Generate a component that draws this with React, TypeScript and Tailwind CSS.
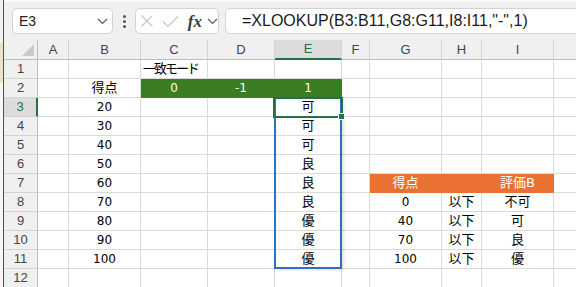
import React from "react";

const COLS = ["A", "B", "C", "D", "E", "F", "G", "H", "I", "J"];

type CellSpec = { t?: string; kind?: "green" | "orange" | "left" | "cjk" };

const data: Record<number, Record<string, CellSpec>> = {
  1: { C: { t: "一致モード", kind: "left" } },
  2: {
    B: { t: "得点", kind: "cjk" },
    C: { t: "0", kind: "green" },
    D: { t: "-1", kind: "green" },
    E: { t: "1", kind: "green" },
  },
  3: { B: { t: "20" }, E: { t: "可", kind: "cjk" } },
  4: { B: { t: "30" }, E: { t: "可", kind: "cjk" } },
  5: { B: { t: "40" }, E: { t: "可", kind: "cjk" } },
  6: { B: { t: "50" }, E: { t: "良", kind: "cjk" } },
  7: {
    B: { t: "60" },
    E: { t: "良", kind: "cjk" },
    G: { t: "得点", kind: "orange" },
    H: { t: "", kind: "orange" },
    I: { t: "評価B", kind: "orange" },
  },
  8: { B: { t: "70" }, E: { t: "良", kind: "cjk" }, G: { t: "0" }, H: { t: "以下", kind: "cjk" }, I: { t: "不可", kind: "cjk" } },
  9: { B: { t: "80" }, E: { t: "優", kind: "cjk" }, G: { t: "40" }, H: { t: "以下", kind: "cjk" }, I: { t: "可", kind: "cjk" } },
  10: { B: { t: "90" }, E: { t: "優", kind: "cjk" }, G: { t: "70" }, H: { t: "以下", kind: "cjk" }, I: { t: "良", kind: "cjk" } },
  11: { B: { t: "100" }, E: { t: "優", kind: "cjk" }, G: { t: "100" }, H: { t: "以下", kind: "cjk" }, I: { t: "優", kind: "cjk" } },
  12: {},
};

function Cell({ spec }: { spec?: CellSpec }) {
  if (!spec) {
    return <div className="h-[19px] border-r border-b border-[#dadada]" />;
  }
  if (spec.kind === "green") {
    return (
      <div className="h-[19px] border-r border-b border-[#3b7d23] bg-[#3b7d23] text-white text-[12px] flex items-center justify-center">
        {spec.t}
      </div>
    );
  }
  if (spec.kind === "orange") {
    return (
      <div className="h-[19px] border-r border-b border-[#e97132] bg-[#e97132] text-white text-[13px] flex items-center justify-center">
        {spec.t}
      </div>
    );
  }
  if (spec.kind === "left") {
    return (
      <div className="h-[19px] border-r border-b border-[#dadada] text-black text-[13px] tracking-[-2px] flex items-center pl-[2px] whitespace-nowrap overflow-visible">
        {spec.t}
      </div>
    );
  }
  if (spec.kind === "cjk") {
    return (
      <div className="h-[19px] border-r border-b border-[#dadada] text-black text-[13px] flex items-center justify-center whitespace-nowrap">
        {spec.t}
      </div>
    );
  }
  return (
    <div className="h-[19px] border-r border-b border-[#dadada] text-black text-[12px] flex items-center justify-center whitespace-nowrap">
      {spec.t}
    </div>
  );
}

function Chevron() {
  return (
    <svg width="11" height="7" viewBox="0 0 11 7">
      <path d="M1 1L5.5 5.5L10 1" stroke="#5a5a5a" strokeWidth="1.2" fill="none" />
    </svg>
  );
}

export default function App() {
  const rows = [1, 2, 3, 4, 5, 6, 7, 8, 9, 10, 11, 12];
  return (
    <div className="w-[576px] h-[287px] overflow-hidden flex bg-white font-['DejaVu_Sans','Noto_Sans_CJK_JP',sans-serif]">
      {/* left window edge */}
      <div className="w-[4px] shrink-0 h-full flex flex-col border-r border-[#1f6e43]">
        <div className="h-[43px] bg-[#f0f0f0]" />
        <div className="h-[40px] bg-[#e9e5c4]" />
        <div className="flex-1 bg-[#f7f7f7]" />
      </div>

      <div className="flex-1 flex flex-col min-w-0 overflow-hidden">
        {/* formula toolbar */}
        <div className="h-[40px] shrink-0 bg-[#f0f0f0] border-t-2 border-[#fafafa] flex items-center pl-[8px] font-['Liberation_Sans',sans-serif]">
          <div className="w-[101px] shrink-0 h-[26px] bg-white border border-[#d3d3d3] rounded-[5px] flex items-center justify-between pl-[6px] pr-[4px]">
            <span className="text-[14px] text-[#222]">E3</span>
            <Chevron />
          </div>
          <div className="w-[22px] shrink-0 flex flex-col items-center gap-[2px]">
            <span className="w-[3px] h-[3px] rounded-full bg-[#555]" />
            <span className="w-[3px] h-[3px] rounded-full bg-[#555]" />
            <span className="w-[3px] h-[3px] rounded-full bg-[#555]" />
          </div>
          <div className="w-[84px] shrink-0 h-[26px] bg-white border border-[#d3d3d3] rounded-[5px] flex items-center pl-[4px]">
            <svg width="14" height="14" viewBox="0 0 14 14">
              <path d="M1.5 1.5L12.5 12.5M12.5 1.5L1.5 12.5" stroke="#c6c6c6" strokeWidth="1.2" fill="none" />
            </svg>
            <svg width="17" height="13" viewBox="0 0 17 13" className="ml-[8px]">
              <path d="M1 6.5L6 11.5L16 1.5" stroke="#c6c6c6" strokeWidth="1.2" fill="none" />
            </svg>
            <span className="ml-[9px] text-[17px] italic font-semibold text-[#3a3a3a] font-['Liberation_Serif',serif] leading-none">
              fx
            </span>
            <span className="ml-[5px]">
              <Chevron />
            </span>
          </div>
          <div className="ml-[6px] w-[370px] h-[26px] bg-white border border-[#d3d3d3] rounded-l-[5px] flex items-center pl-[16px] shrink-0">
            <span className="text-[16px] text-[#1a1a1a] whitespace-nowrap">=XLOOKUP(B3:B11,G8:G11,I8:I11,"-",1)</span>
          </div>
        </div>

        {/* sheet grid */}
        <div className="relative w-[622px]">
          <div className="grid grid-cols-[34px_31px_72px_67px_67px_67px_28px_72px_40px_72px_72px]">
            {/* header row */}
            <div className="h-[20px] bg-[#f0f0f0] border-r border-b border-[#bdbdbd] relative">
              <svg width="12" height="12" viewBox="0 0 12 12" className="absolute right-[3px] bottom-[3px]">
                <path d="M12 0L12 12L0 12Z" fill="#c9c9c9" />
              </svg>
            </div>
            {COLS.map((c) =>
              c === "E" ? (
                <div
                  key={c}
                  className="h-[20px] bg-[#dcdcdc] border-r border-[#d4d4d4] border-b-2 border-b-[#217346] flex items-center justify-center text-[13px] text-[#217346] font-['Liberation_Sans',sans-serif]"
                >
                  {c}
                </div>
              ) : (
                <div
                  key={c}
                  className="h-[20px] bg-[#f0f0f0] border-r border-[#d4d4d4] border-b border-b-[#bdbdbd] flex items-center justify-center text-[13px] text-[#444] font-['Liberation_Sans',sans-serif]"
                >
                  {c === "J" ? "" : c}
                </div>
              )
            )}
            {rows.map((r) => (
              <React.Fragment key={r}>
                {r === 3 ? (
                  <div className="h-[19px] bg-[#dcdcdc] border-r-2 border-r-[#217346] border-b border-b-[#d4d4d4] flex items-center justify-center text-[13px] text-[#217346] font-['Liberation_Sans',sans-serif]">
                    {r}
                  </div>
                ) : (
                  <div className="h-[19px] bg-[#f0f0f0] border-r border-r-[#bdbdbd] border-b border-b-[#d4d4d4] flex items-center justify-center text-[13px] text-[#444] font-['Liberation_Sans',sans-serif]">
                    {r}
                  </div>
                )}
                {COLS.map((c) => (
                  <Cell key={c} spec={data[r]?.[c]} />
                ))}
              </React.Fragment>
            ))}
          </div>

          {/* spill range highlight E3:E11 */}
          <div className="absolute left-[270px] top-[57px] w-[68px] h-[172px] border-2 border-[#2f6ec2] shadow-[2px_1px_3px_rgba(0,0,0,0.12)] pointer-events-none" />
          {/* active cell E3 */}
          <div className="absolute left-[269px] top-[57px] w-[70px] h-[21px] border-2 border-[#217346] pointer-events-none" />
          <div className="absolute left-[334px] top-[73px] w-[7px] h-[7px] bg-[#217346] border border-white pointer-events-none" />
        </div>
      </div>
    </div>
  );
}
